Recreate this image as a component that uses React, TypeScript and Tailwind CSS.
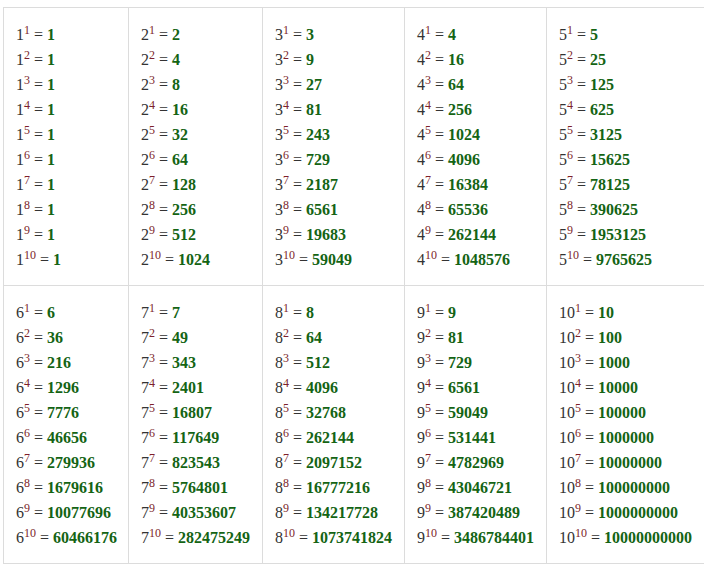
const ROWS = [
  [1, 2, 3, 4, 5],
  [6, 7, 8, 9, 10],
]

const EXPONENTS = [1, 2, 3, 4, 5, 6, 7, 8, 9, 10]

function PowerCell({ base }: { base: number }) {
  return (
    <div className="h-[278px] border-r border-b border-[#dcdcdc] pl-3 pt-[14px]">
      {EXPONENTS.map((e) => (
        <div key={e} className="leading-[25px] whitespace-nowrap">
          <span className="text-[#333333]">{base}</span>
          <sup className="text-[12px] text-[#7d1f2b]">{e}</sup>
          <span className="text-[#333333]"> = </span>
          <strong className="font-bold text-[#146414]">{(BigInt(base) ** BigInt(e)).toString()}</strong>
        </div>
      ))}
    </div>
  )
}

export default function App() {
  return (
    <div className="w-[704px] h-[570px] overflow-hidden bg-white pt-[7px] pl-[3px] font-['Liberation_Serif','Times_New_Roman',serif]">
      <div className="grid w-[710px] grid-cols-[125px_134px_142px_142px_167px] border-t border-l border-[#dcdcdc] text-[16px]">
        {ROWS.flat().map((b) => (
          <PowerCell key={b} base={b} />
        ))}
      </div>
    </div>
  )
}
